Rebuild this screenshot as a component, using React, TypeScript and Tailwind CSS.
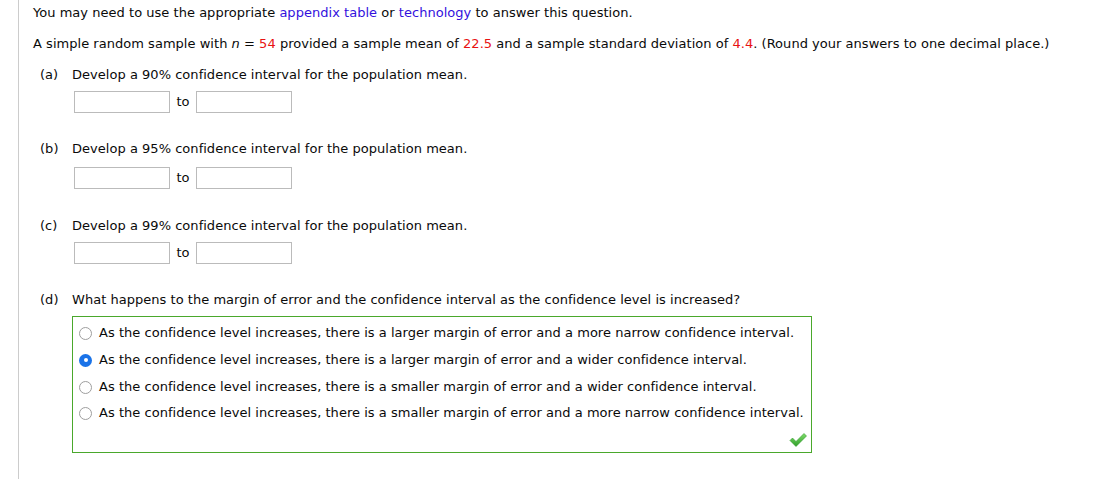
const font = { fontFamily: '"DejaVu Sans", Verdana, sans-serif' };

function Blanks() {
  return (
    <div className="flex items-center ml-[41px]">
      <div className="w-[96px] h-[22px] border border-[#bbb] bg-white" />
      <span className="w-[26px] text-center">to</span>
      <div className="w-[96px] h-[22px] border border-[#bbb] bg-white" />
    </div>
  );
}

function Radio({ checked }: { checked?: boolean }) {
  if (checked) {
    return (
      <span className="w-[13px] h-[13px] rounded-full bg-[#1a73e8] flex items-center justify-center shrink-0">
        <span className="w-[4px] h-[4px] rounded-full bg-white" />
      </span>
    );
  }
  return <span className="w-[13px] h-[13px] rounded-full border border-[#9e9e9e] bg-white shrink-0" />;
}

const options = [
  'As the confidence level increases, there is a larger margin of error and a more narrow confidence interval.',
  'As the confidence level increases, there is a larger margin of error and a wider confidence interval.',
  'As the confidence level increases, there is a smaller margin of error and a wider confidence interval.',
  'As the confidence level increases, there is a smaller margin of error and a more narrow confidence interval.',
];

export default function App() {
  return (
    <div
      className="w-[1110px] h-[479px] bg-white text-[13px] leading-[16px] tracking-[0.03px] text-[#0a0a0a]"
      style={font}
    >
      <div className="ml-[18px] h-full border-l border-[#ccc] pl-[14px] pt-[5px]">
        <p>
          You may need to use the appropriate <span className="text-[#3311dd]">appendix table</span> or{' '}
          <span className="text-[#3311dd]">technology</span> to answer this question.
        </p>
        <p className="mt-[15px]">
          A simple random sample with <i>n</i> = <span className="text-[#e81212]">54</span> provided a sample mean of{' '}
          <span className="text-[#e81212]">22.5</span> and a sample standard deviation of{' '}
          <span className="text-[#e81212]">4.4</span>. (Round your answers to one decimal place.)
        </p>

        <div className="mt-[15px] flex ml-[7px]">
          <span className="w-[32px]">(a)</span>
          <span>Develop a 90% confidence interval for the population mean.</span>
        </div>
        <div className="mt-[8px]">
          <Blanks />
        </div>

        <div className="mt-[28px] flex ml-[7px]">
          <span className="w-[32px]">(b)</span>
          <span>Develop a 95% confidence interval for the population mean.</span>
        </div>
        <div className="mt-[10px]">
          <Blanks />
        </div>

        <div className="mt-[29px] flex ml-[7px]">
          <span className="w-[32px]">(c)</span>
          <span>Develop a 99% confidence interval for the population mean.</span>
        </div>
        <div className="mt-[8px]">
          <Blanks />
        </div>

        <div className="mt-[28px] flex ml-[7px]">
          <span className="w-[32px]">(d)</span>
          <span>What happens to the margin of error and the confidence interval as the confidence level is increased?</span>
        </div>

        <div className="mt-[8px] ml-[39px] w-[740px] h-[137px] border border-[#4aa82c] pt-[8px] pl-[6px] flex flex-col">
          <div className="flex flex-col">
            {options.map((o, i) => (
              <div
                key={o}
                className={`flex items-center gap-[7px] h-[16px] ${i === 0 ? '' : i === 3 ? 'mt-[10px]' : 'mt-[11px]'}`}
              >
                <Radio checked={i === 1} />
                <span>{o}</span>
              </div>
            ))}
          </div>
          <div className="flex justify-end pr-[4px] mt-[11px]">
            <svg width="18" height="15" viewBox="0 0 18 15">
              <defs>
                <linearGradient id="ck" x1="0" y1="0" x2="0" y2="1">
                  <stop offset="0" stopColor="#7fdc6a" />
                  <stop offset="1" stopColor="#2f9e2a" />
                </linearGradient>
              </defs>
              <path
                d="M1 8.5 L3.5 6 L7 9.5 L15 1.5 L17.5 4 L7 14.5 Z"
                fill="url(#ck)"
                stroke="#2f9a2a"
                strokeWidth="0.6"
                strokeLinejoin="round"
              />
            </svg>
          </div>
        </div>
      </div>
    </div>
  );
}
